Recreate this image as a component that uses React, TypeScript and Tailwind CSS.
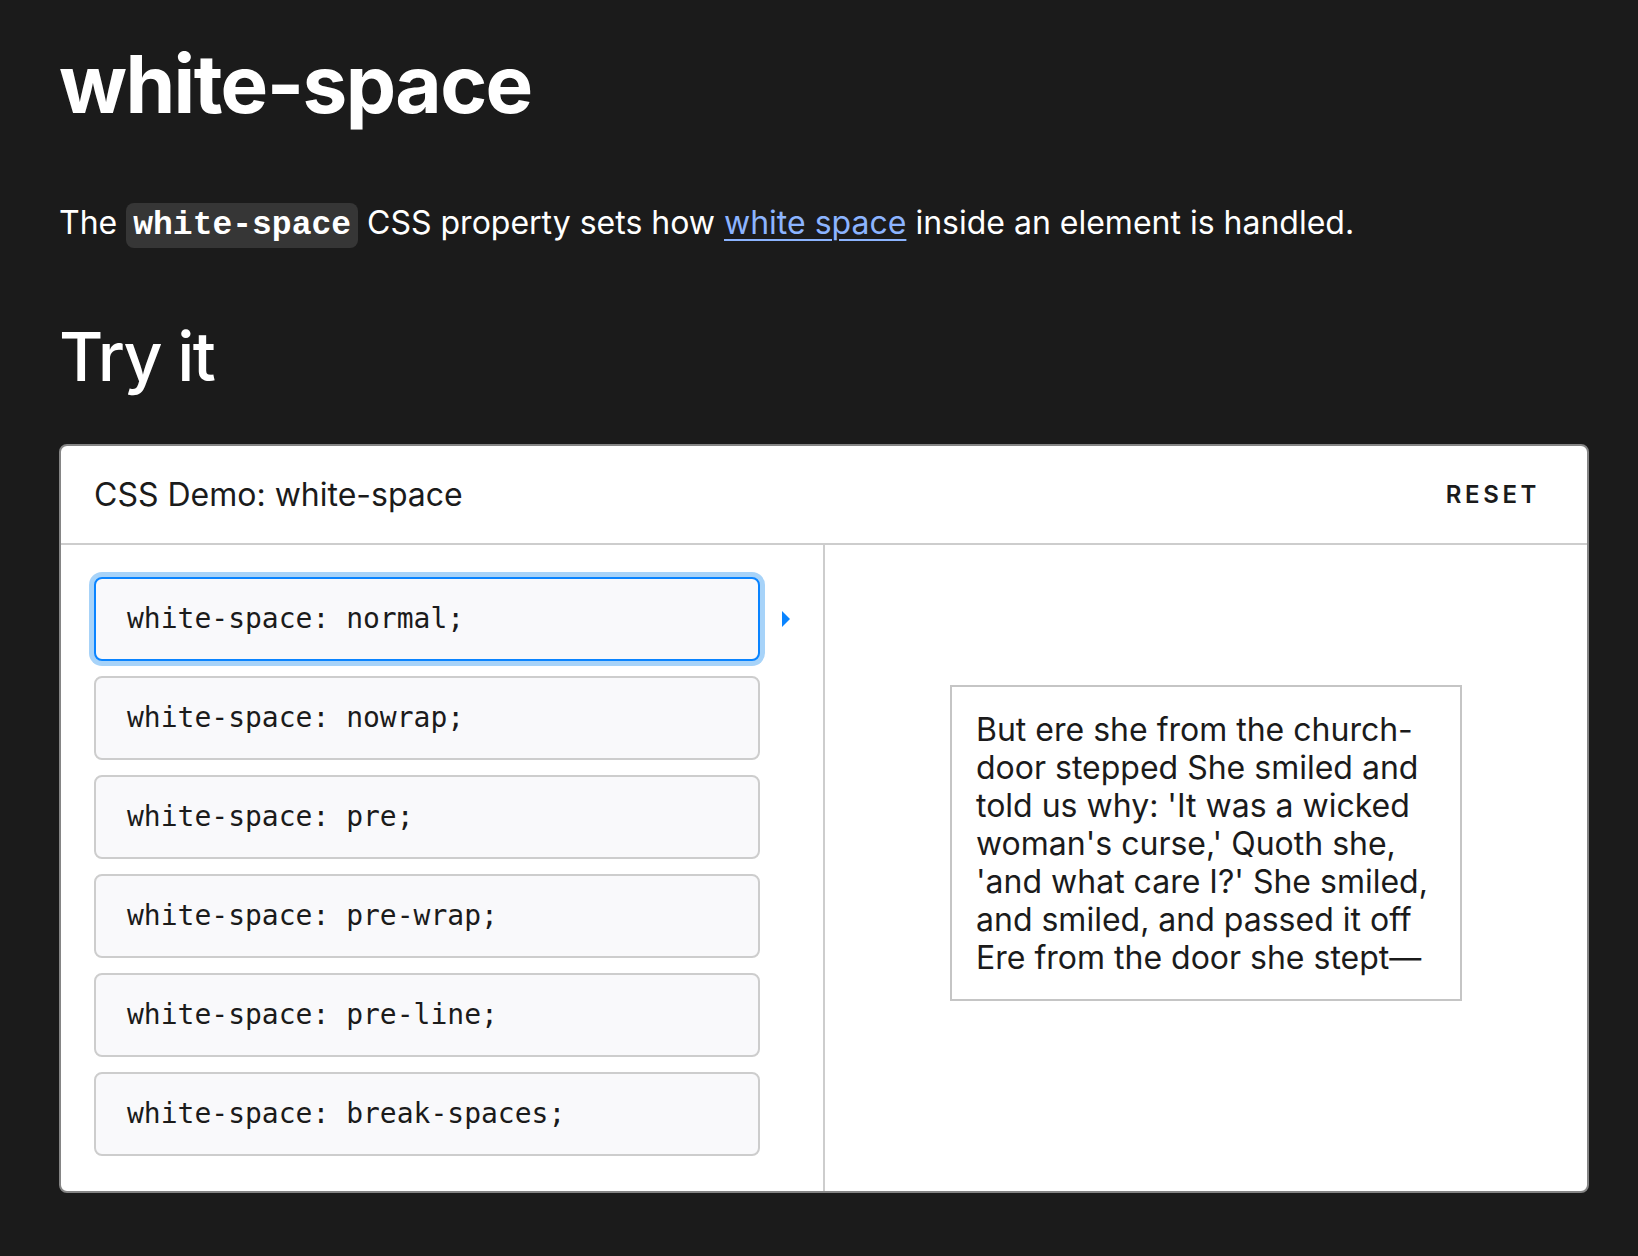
const options = [
  "white-space: normal;",
  "white-space: nowrap;",
  "white-space: pre;",
  "white-space: pre-wrap;",
  "white-space: pre-line;",
  "white-space: break-spaces;",
]

const sample =
  "But ere she from the church-door stepped She smiled and told us why: 'It was a wicked woman's curse,' Quoth she, 'and what care I?' She smiled, and smiled, and passed it off Ere from the door she stept\u2014"

function Arrow({ show }: { show: boolean }) {
  return (
    <svg width="8" height="16" viewBox="0 0 8 16" className={show ? "block" : "invisible"}>
      <path d="M0 0 L8 8 L0 16 Z" fill="#0a84ff" />
    </svg>
  )
}

export default function App() {
  return (
    <div className="min-h-screen bg-[#1b1b1b] pl-[59px] pr-[49px] font-['Inter','Noto_Sans',sans-serif] text-white">
      <h1 className="pt-[36px] text-[80px] leading-[96px] font-bold tracking-[-0.02em]">white-space</h1>

      <p className="mt-[67px] text-[32px] leading-[48px]">
        The{" "}
        <code className="rounded-lg bg-[#363636] px-[7px] py-[4px] font-['Liberation_Mono',monospace] text-[33px] leading-none font-bold">
          white-space
        </code>{" "}
        CSS property sets how{" "}
        <a href="#" className="text-[#8cb4ff] underline decoration-2 underline-offset-[5px]">
          white space
        </a>{" "}
        inside an element is handled.
      </p>

      <h2 className="mt-[69px] text-[68px] leading-[80px] font-medium tracking-[-0.025em]">Try it</h2>

      <section className="mt-[48px] w-[1530px] overflow-hidden rounded-lg border-2 border-[#858585] bg-white text-[#1b1b1b]">
        <header className="flex h-[99px] items-center justify-between border-b-2 border-[#cdcdcd] pl-[33px] pr-[47px]">
          <h4 className="text-[32px] font-normal">CSS Demo: white-space</h4>
          <button className="text-[24px] font-semibold uppercase tracking-[0.15em]">Reset</button>
        </header>

        <div className="flex">
          <div className="flex w-[764px] flex-col gap-[15px] border-r-2 border-[#cdcdcd] pt-[32px] pb-[35px] pl-[33px]">
            {options.map((o, i) => (
              <div key={o} className="flex items-center gap-[22px]">
                <button
                  className={
                    i === 0
                      ? "flex h-[84px] w-[666px] items-center rounded-lg border-2 border-[#0a84ff] bg-[#f9f9fb] pl-[31px] text-left shadow-[0_0_0_5px_#a7d3f9]"
                      : "flex h-[84px] w-[666px] items-center rounded-lg border-2 border-[#cdcdcd] bg-[#f9f9fb] pl-[31px] text-left"
                  }
                >
                  <span className="font-['DejaVu_Sans_Mono',monospace] text-[28px] whitespace-pre text-[#1b1b1b]">{o}</span>
                </button>
                <Arrow show={i === 0} />
              </div>
            ))}
          </div>

          <div className="flex flex-1 items-start justify-center pt-[140px]">
            <div className="w-[512px] border-2 border-[#c5c5c5] px-6 pt-[24px] pb-[22px] text-[32px] leading-[38px]">
              {sample}
            </div>
          </div>
        </div>
      </section>
    </div>
  )
}
